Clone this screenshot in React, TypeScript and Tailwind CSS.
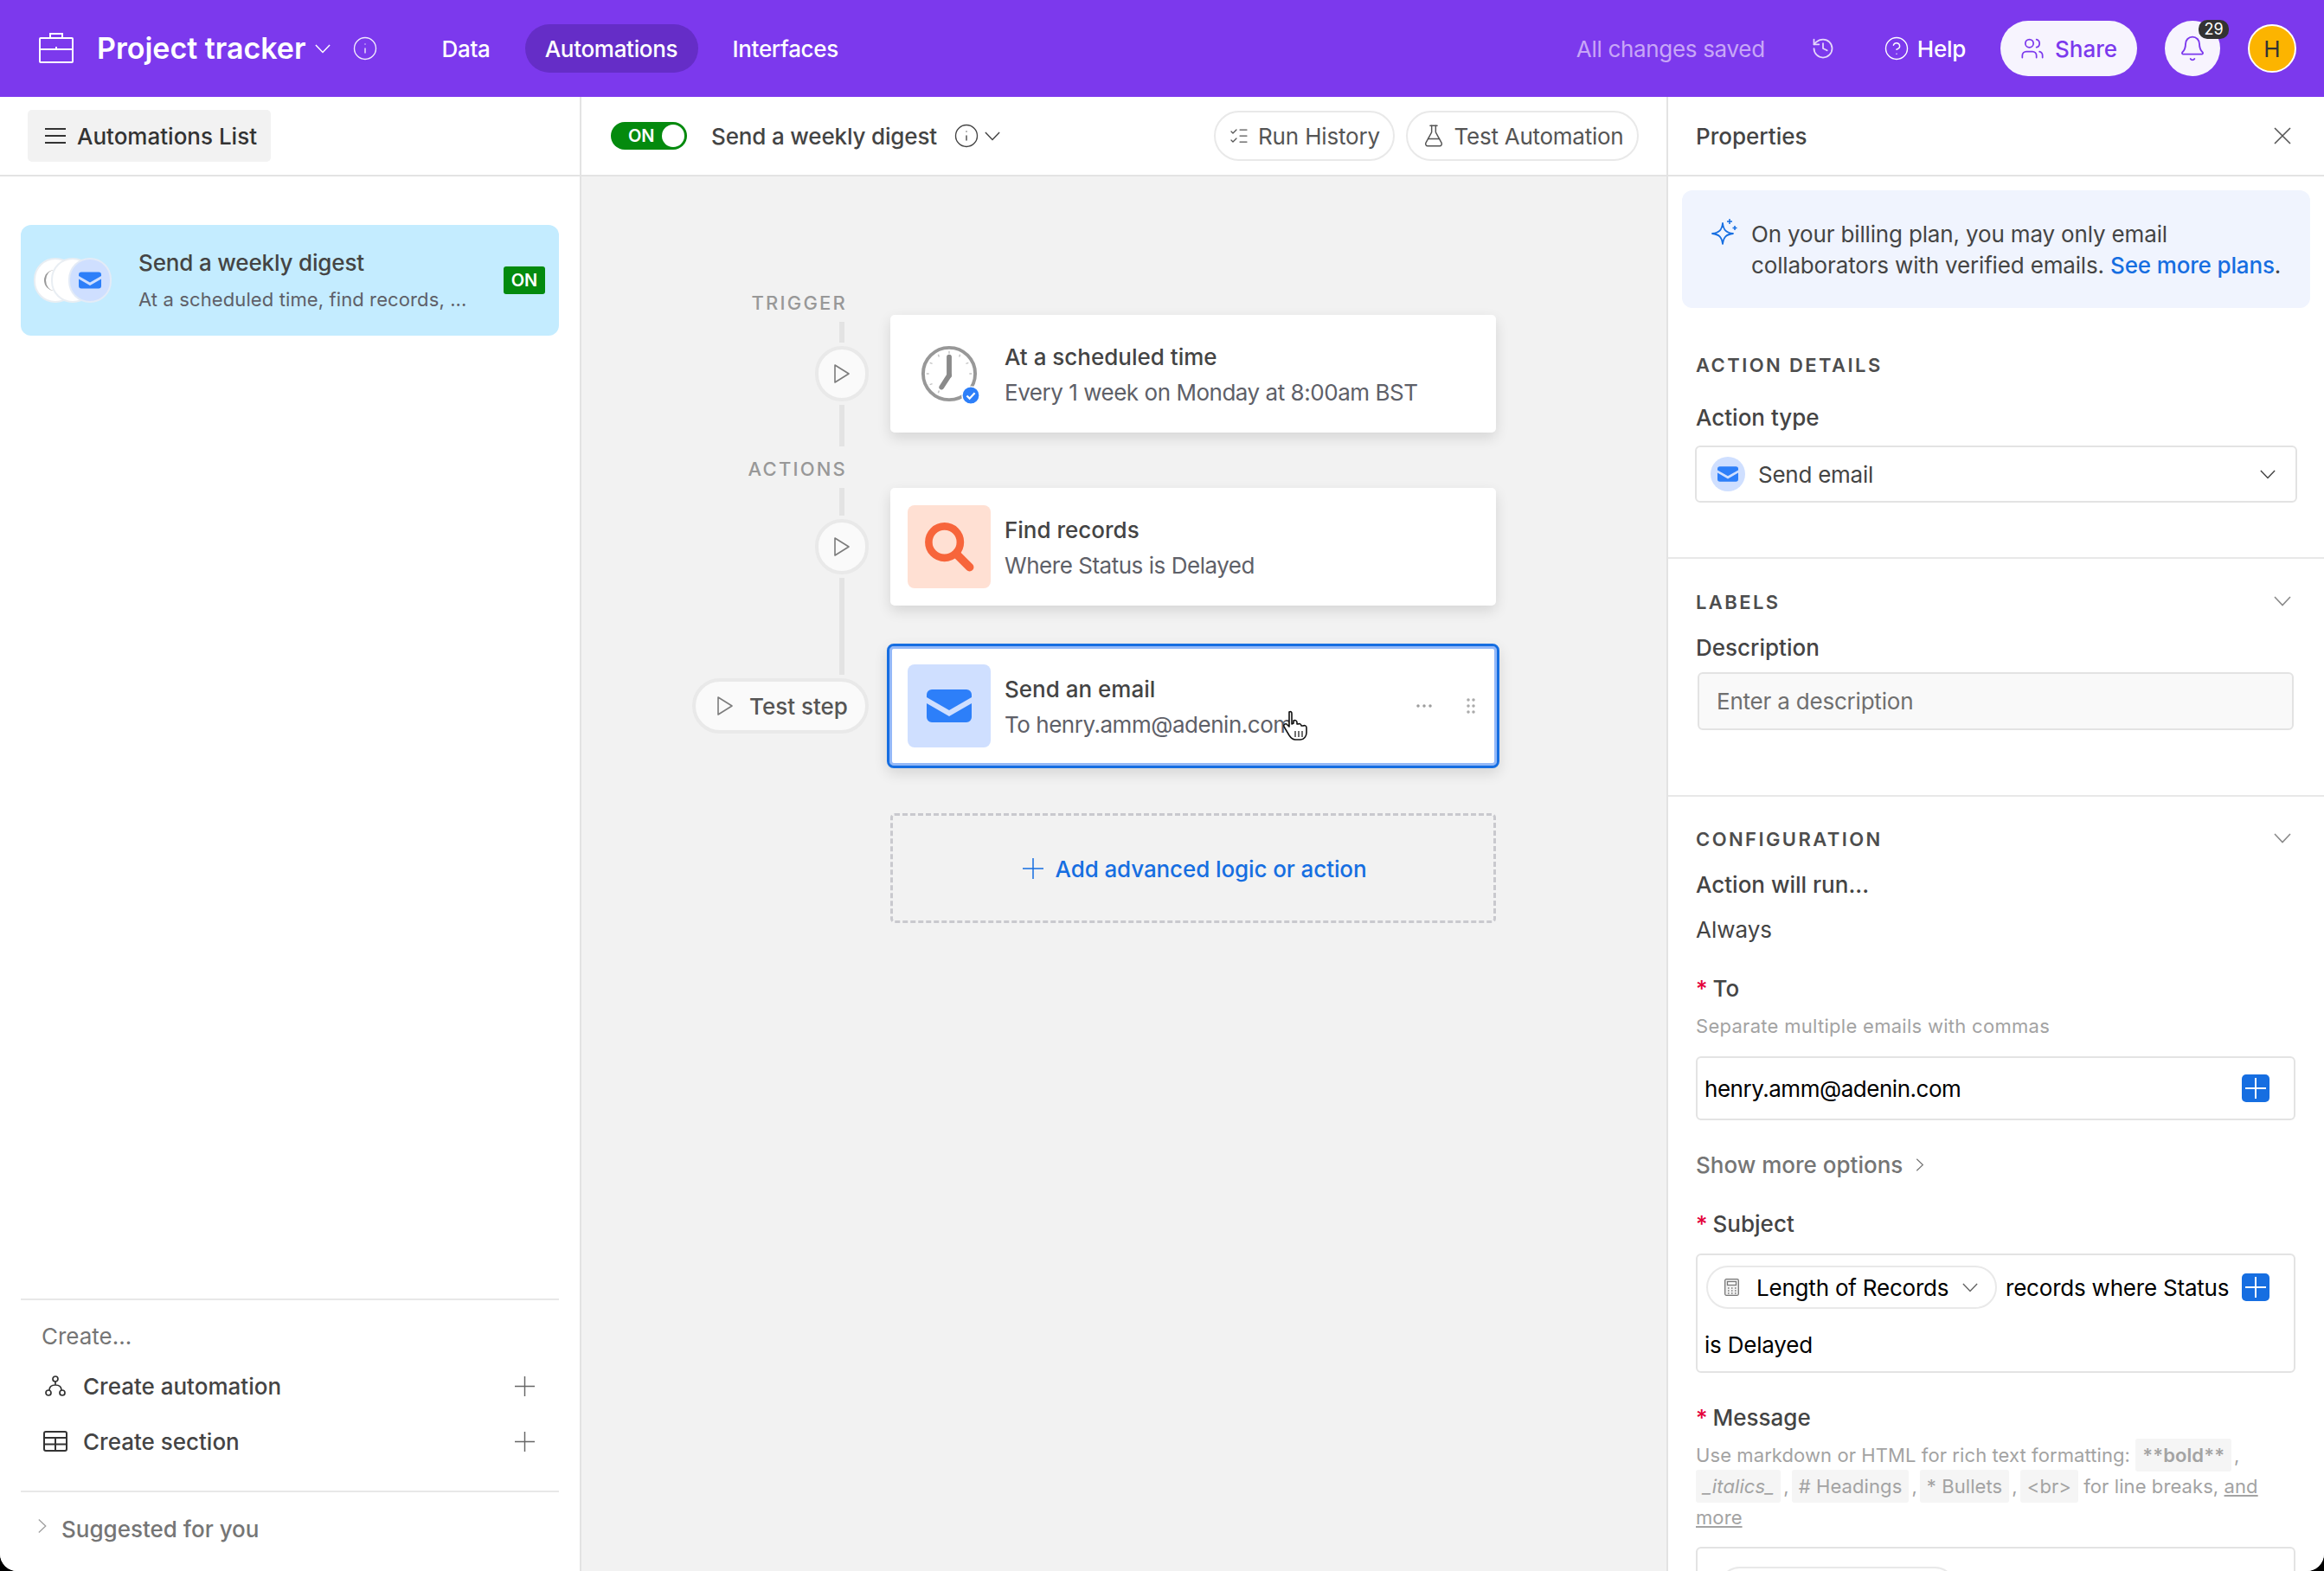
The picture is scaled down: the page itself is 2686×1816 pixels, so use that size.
import React from 'react';
import { Bell, CircleHelp, Ellipsis, FlaskConical, GripVertical, History, Info, ListChecks, Users } from 'lucide-react';

const MailGlyph: React.FC<{ className?: string }> = ({ className }) => (
  <svg viewBox="0 0 52 38" className={className}>
    <path d="M6 0h40a6 6 0 0 1 6 6v3L26 24 0 9V6a6 6 0 0 1 6-6z" fill="#2d7ff9" />
    <path d="M0 16l26 15 26-15v16a6 6 0 0 1-6 6H6a6 6 0 0 1-6-6z" fill="#2d7ff9" />
  </svg>
);

const PlayGlyph: React.FC = () => (
  <svg viewBox="0 0 20 24" className="w-[20px] h-[24px]" fill="none" stroke="#7c7c7c" strokeWidth="1.6" strokeLinejoin="round">
    <path d="M2 2l16 10L2 22z" />
  </svg>
);

// thin chevron that fills its box, the reference draws them wide and flat
const Chevron: React.FC<{ className?: string }> = ({ className }) => (
  <svg viewBox="0 0 20 12" className={className} fill="none" stroke="currentColor" strokeWidth="1.6">
    <path d="M1 1l9 9.5L19 1" />
  </svg>
);

const PlusGlyph: React.FC<{ className?: string; weight?: number }> = ({ className, weight = 1.5 }) => (
  <svg viewBox="0 0 24 24" className={className} fill="none" stroke="currentColor" strokeWidth={weight}>
    <path d="M12 0v24M0 12h24" />
  </svg>
);

const PlayDot: React.FC = () => (
  <div className="w-[62px] h-[64px] rounded-full bg-[#fafafa] border-4 border-[#e9e9e9] flex items-center justify-center">
    <PlayGlyph />
  </div>
);

const Line: React.FC<{ className: string }> = ({ className }) => (
  <div className={`w-[6px] mr-[28px] bg-[#e3e3e3] ${className}`} />
);

const RailLabel: React.FC<{ children: React.ReactNode }> = ({ children }) => (
  <div className="h-[30px] leading-[30px] mr-[25px] text-[22px] font-medium tracking-[0.1em] text-[#989898]">{children}</div>
);

const SectionTitle: React.FC<{ children: React.ReactNode; chevron?: boolean }> = ({ children, chevron }) => (
  <div className="h-[30px] flex items-center justify-between pr-[38px]">
    <span className="text-[22px] font-semibold tracking-[0.11em] text-[#4d4d4d]">{children}</span>
    {chevron && <Chevron className="w-[20px] h-[12px] mb-[2px] text-[#8a8a8a]" />}
  </div>
);

const FieldLabel: React.FC<{ children: React.ReactNode; required?: boolean; className?: string }> = ({ children, required, className }) => (
  <div className={`h-[32px] leading-[32px] text-[26px] font-medium text-[#444444] ${className ?? ''}`}>
    {required && <span className="text-[#e4003a] mr-[6px]">*</span>}
    {children}
  </div>
);

const AddToken: React.FC = () => (
  <div className="w-[32px] h-[32px] rounded-[5px] bg-[#166ee1] flex items-center justify-center shrink-0 text-white">
    <PlusGlyph className="w-[24px] h-[24px]" weight={2} />
  </div>
);

const Code: React.FC<{ children: React.ReactNode; className?: string }> = ({ children, className }) => (
  <span className={`bg-[#f5f5f5] px-[8px] py-[6px] rounded-[3px] ${className ?? ''}`}>{children}</span>
);

const Comma: React.FC = () => <span className="mx-[3px]">,</span>;

const TopBar: React.FC = () => (
  <header className="h-[112px] bg-[#7c39ed] flex items-center text-white shrink-0">
    <svg viewBox="0 0 40 36" className="w-[42px] h-[36px] ml-[44px] mb-[3px]" fill="none" stroke="white" strokeWidth="2">
      <path d="M13 7V2h14v5" />
      <rect x="1" y="7" width="38" height="28" rx="1" />
      <path d="M1 20h38" />
      <path d="M20 17v2" />
    </svg>
    <span className="ml-[26px] text-[34px] font-semibold leading-none">Project tracker</span>
    <Chevron className="ml-[11px] w-[18px] h-[11px]" />
    <Info className="ml-[25px] w-[30px] h-[30px] opacity-90" strokeWidth={1.1} />
    <nav className="ml-[73px] flex items-center text-[26px] font-medium tracking-[-0.012em]">
      <span>Data</span>
      <span className="ml-[40px] h-[56px] w-[200px] rounded-full bg-[#652dc7] flex items-center justify-center">Automations</span>
      <span className="ml-[40px]">Interfaces</span>
    </nav>
    <div className="ml-auto flex items-center">
      <span className="text-[26px] text-[#c8a6f7] tracking-[-0.012em]">All changes saved</span>
      <History className="ml-[53px] w-[28px] h-[28px] text-[#e6d8fb]" strokeWidth={1.5} />
      <CircleHelp className="ml-[56px] w-[30px] h-[30px]" strokeWidth={1.1} />
      <span className="ml-[9px] text-[26px] font-medium tracking-[-0.01em]">Help</span>
      <div className="ml-[40px] h-[64px] w-[158px] rounded-full bg-[#f7f4fe] text-[#7c39ed] flex items-center justify-center gap-[12px] text-[26px] font-medium">
        <Users className="w-[28px] h-[28px]" strokeWidth={1.5} />
        Share
      </div>
      <div className="relative ml-[32px] w-[64px] h-[64px] rounded-full bg-[#f7f4fe] flex items-center justify-center">
        <Bell className="w-[32px] h-[32px] text-[#7c39ed]" strokeWidth={1.4} />
        <span className="absolute -top-[1px] left-[39px] w-[35px] h-[22px] rounded-[10px] bg-[#333333] text-white text-[18px] leading-[22px] text-center">29</span>
      </div>
      <div className="ml-[32px] mr-[32px] w-[56px] h-[56px] rounded-full bg-[#fcb400] border-2 border-white text-[#333333] flex items-center justify-center text-[26px]">H</div>
    </div>
  </header>
);

const Sidebar: React.FC = () => (
  <aside className="w-[672px] shrink-0 flex flex-col bg-white border-r-2 border-[#e3e3e3]">
    <div className="h-[92px] border-b-2 border-[#e3e3e3] flex items-center pl-[32px] shrink-0">
      <div className="w-[281px] h-[60px] rounded-[5px] bg-[#f2f2f2] flex items-center pl-[20px] gap-[13px] text-[26px] font-medium text-[#333333]">
        <svg viewBox="0 0 24 18" className="w-[24px] h-[18px]" fill="none" stroke="currentColor" strokeWidth="2">
          <path d="M0 1h24M0 9h24M0 17h24" />
        </svg>
        Automations List
      </div>
    </div>
    <div className="flex-1 px-[24px] pt-[56px]">
      <div className="h-[128px] rounded-[12px] bg-[#c4ecff] flex items-center pl-[15px] pr-[16px]">
        <div className="flex w-[121px] shrink-0">
          <div className="w-[50px] h-[52px] rounded-full bg-white border-2 border-[#e9eef3] flex items-center pl-[10px]">
            <div className="w-[12px] h-[24px] rounded-l-full border-l-2 border-[#999999]" />
          </div>
          <div className="-ml-[30px] w-[50px] h-[52px] rounded-full bg-white border-2 border-[#e9eef3]" />
          <div className="-ml-[30px] w-[50px] h-[52px] rounded-full bg-[#cfdfff] border-2 border-[#e3ebf7] flex items-center justify-center">
            <MailGlyph className="w-[26px] h-[20px]" />
          </div>
        </div>
        <div className="flex-1 min-w-0">
          <div className="text-[26px] font-medium text-[#444444] leading-[32px] tracking-[-0.006em]">Send a weekly digest</div>
          <div className="mt-[11px] text-[22px] text-[#5e6068] leading-[30px] tracking-[0.005em]">At a scheduled time, find records, ...</div>
        </div>
        <span className="w-[48px] h-[32px] rounded-[3px] bg-[#048a0e] text-white text-[20px] font-semibold flex items-center justify-center">ON</span>
      </div>
    </div>
    <div className="mx-[24px] border-t-2 border-[#e8e8e8] pt-[26px] pb-[25px] px-[24px]">
      <div className="h-[32px] leading-[32px] text-[26px] text-[#757575]">Create...</div>
      <div className="mt-[9px] h-[64px] flex items-center text-[26px] font-medium text-[#444444]">
        <svg viewBox="0 0 24 24" className="ml-[4px] w-[24px] h-[24px] mr-[20px]" fill="none" stroke="#333333" strokeWidth="1.7">
          <circle cx="12" cy="4" r="3" />
          <circle cx="4" cy="20" r="3" />
          <circle cx="20" cy="20" r="3" />
          <path d="M12 7v4M5 17c0-4 3-6 7-6s7 2 7 6" />
        </svg>
        Create automation
        <PlusGlyph className="ml-auto mr-[4px] w-[23px] h-[23px] text-[#666666]" />
      </div>
      <div className="h-[64px] flex items-center text-[26px] font-medium text-[#444444]">
        <svg viewBox="0 0 28 24" className="ml-[2px] w-[28px] h-[24px] mr-[18px]" fill="none" stroke="#333333" strokeWidth="2">
          <rect x="1" y="1" width="26" height="22" rx="2" />
          <path d="M1 8h26M1 15.5h26M14 8v15" />
        </svg>
        Create section
        <PlusGlyph className="ml-auto mr-[4px] w-[23px] h-[23px] text-[#666666]" />
      </div>
    </div>
    <div className="mx-[24px] border-t-2 border-[#e8e8e8] h-[93px] flex items-start pt-[23px] pl-[20px] text-[26px] font-medium text-[#757575]">
      <Chevron className="w-[18px] h-[10px] mt-[11px] -ml-[4px] mr-[13px] -rotate-90 text-[#a0a0a0]" />
      Suggested for you
    </div>
  </aside>
);

const FlowCard: React.FC<{ icon: React.ReactNode; title: string; sub: string; className?: string }> = ({ icon, title, sub, className }) => (
  <div className={`w-[700px] bg-white rounded-[5px] shadow-[0_6px_16px_rgba(0,0,0,0.12)] flex items-center pl-[20px] ${className ?? ''}`}>
    <div className="w-[96px] h-[96px] flex items-center justify-center shrink-0">{icon}</div>
    <div className="ml-[16px] pt-[3px]">
      <div className="text-[26px] font-medium text-[#444444] leading-[32px]">{title}</div>
      <div className="mt-[9px] text-[26px] text-[#5e6068] leading-[32px] tracking-[-0.018em]">{sub}</div>
    </div>
  </div>
);

const ClockIcon: React.FC = () => (
  <div className="relative w-[66px] h-[66px]">
    <svg viewBox="0 0 68 68" className="w-[66px] h-[66px]" fill="none" stroke="#989898">
      <circle cx="34" cy="34" r="31" strokeWidth="4" />
      <path d="M34 14v22" strokeWidth="6" strokeLinecap="round" stroke="#8a8a8a" />
      <path d="M34 36l-9 14" strokeWidth="6" strokeLinecap="round" stroke="#8a8a8a" />
      <path d="M34 7v3M61 34h-3M10 34H7M47 11l-1 3M21 11l1 3M11 21l3 1M57 21l-3 1M11 47l3-1M21 57l1-3" strokeWidth="1.5" stroke="#c4c4c4" />
    </svg>
    <svg viewBox="0 0 24 24" className="absolute right-[-3px] bottom-[-3px] w-[22px] h-[22px]">
      <circle cx="12" cy="12" r="11" fill="#2d7ff9" stroke="white" strokeWidth="1.5" />
      <path d="M7 12.5l3.5 3.5L17 9" fill="none" stroke="white" strokeWidth="2.5" />
    </svg>
  </div>
);

const Canvas: React.FC = () => (
  <main className="flex-1 min-w-0 flex flex-col bg-[#f2f2f2]">
    <div className="h-[92px] bg-white border-b-2 border-[#e3e3e3] flex items-center pl-[34px] pr-[32px] shrink-0">
      <div className="w-[88px] h-[32px] rounded-full bg-[#048a0e] flex items-center justify-between pl-[20px] pr-[3px]">
        <span className="text-white text-[20px] font-semibold">ON</span>
        <span className="w-[26px] h-[26px] rounded-full bg-white" />
      </div>
      <span className="ml-[28px] text-[26px] font-medium text-[#444444] tracking-[-0.006em]">Send a weekly digest</span>
      <Info className="ml-[19px] w-[30px] h-[30px] text-[#444444]" strokeWidth={1.1} />
      <Chevron className="ml-[6px] w-[18px] h-[11px] text-[#444444]" />
      <div className="ml-auto h-[58px] w-[209px] rounded-full bg-white border-2 border-[#e9e9e9] flex items-center justify-center gap-[10px] text-[26px] text-[#555555] tracking-[-0.006em]">
        <ListChecks className="w-[24px] h-[24px]" strokeWidth={1.25} />
        Run History
      </div>
      <div className="ml-[13px] h-[58px] w-[269px] rounded-full bg-white border-2 border-[#e9e9e9] flex items-center justify-center gap-[10px] text-[26px] text-[#555555] tracking-[-0.01em]">
        <FlaskConical className="w-[28px] h-[28px]" strokeWidth={1.25} />
        Test Automation
      </div>
    </div>

    <div className="flex-1 flex pl-[128px]">
      <div className="w-[204px] flex flex-col items-end pt-[131px]">
        <RailLabel>TRIGGER</RailLabel>
        <Line className="mt-[7px] h-[24px]" />
        <div className="mt-[4px]"><PlayDot /></div>
        <Line className="mt-[4px] h-[48px]" />
        <div className="mt-[11px]"><RailLabel>ACTIONS</RailLabel></div>
        <Line className="mt-[7px] h-[32px]" />
        <div className="mt-[4px]"><PlayDot /></div>
        <Line className="mt-[4px] h-[112px]" />
        <div className="mt-[4px] w-[204px] h-[64px] rounded-full bg-[#fafafa] border-4 border-[#e9e9e9] flex items-center pl-[24px] gap-[18px] text-[26px] font-medium text-[#555555]">
          <PlayGlyph />
          Test step
        </div>
      </div>

      <div className="ml-[25px] pt-[160px] flex flex-col">
        <FlowCard className="h-[136px]" icon={<ClockIcon />} title="At a scheduled time" sub="Every 1 week on Monday at 8:00am BST" />
        <FlowCard
          className="h-[136px] mt-[64px]"
          icon={
            <div className="w-[96px] h-[96px] rounded-[8px] bg-[#ffe0d3] flex items-center justify-center">
              <svg viewBox="0 0 54 54" className="w-[58px] h-[58px]" fill="none" stroke="#f7653b">
                <circle cx="22" cy="22" r="17" strokeWidth="8" />
                <path d="M35 35l14 14" strokeWidth="9" strokeLinecap="round" />
              </svg>
            </div>
          }
          title="Find records"
          sub="Where Status is Delayed"
        />
        <div className="relative -mx-[4px] mt-[44px] h-[144px] w-[708px] rounded-[8px] border-[3px] border-[#166ee1] bg-white shadow-[inset_0_0_0_3px_#93b8f8,0_6px_16px_rgba(0,0,0,0.12)] flex items-center pl-[21px]">
          <div className="w-[96px] h-[96px] rounded-[8px] bg-[#cfdfff] flex items-center justify-center shrink-0">
            <MailGlyph className="w-[52px] h-[38px]" />
          </div>
          <div className="ml-[16px] pt-[3px]">
            <div className="text-[26px] font-medium text-[#444444] leading-[32px]">Send an email</div>
            <div className="mt-[9px] text-[26px] text-[#5e6068] leading-[32px] tracking-[-0.018em]">To henry.amm@adenin.com</div>
          </div>
          <Ellipsis className="ml-auto w-[24px] h-[24px] text-[#9a9a9a]" strokeWidth={1.5} />
          <GripVertical className="ml-[30px] mr-[18px] w-[24px] h-[24px] text-[#a8a8a8]" strokeWidth={1.5} />
          <svg viewBox="0 0 32 36" className="absolute left-[454px] top-[74px] w-[32px] h-[36px]" fill="white" stroke="#111111" strokeWidth="1.6" strokeLinejoin="round">
            <path d="M8 2c2-1 3 0 3 2v12l2-1v-3c2-1 4 0 4 2v2l1 0c2-1 4 0 4 2l2 0c2-1 4 0 4 2v6c0 4-3 8-7 8h-6c-3 0-5-2-7-5L2 19c-1-2 1-4 3-3l3 3z" />
            <path d="M15 24v7M19 24v7M23 24v7" strokeWidth="1.2" />
          </svg>
        </div>
        <div className="mt-[52px] w-[700px] h-[127px] rounded-[5px] border-[3px] border-dashed border-[#c9c9ce] flex items-center justify-center gap-[14px] pl-[3px] pt-[1px] text-[26px] font-medium text-[#166ee1] tracking-[-0.004em]">
          <PlusGlyph className="w-[24px] h-[24px]" />
          Add advanced logic or action
        </div>
      </div>
    </div>
  </main>
);

const Properties: React.FC = () => (
  <aside className="w-[760px] shrink-0 bg-white border-l-2 border-[#e3e3e3] overflow-hidden">
    <div className="h-[92px] border-b-2 border-[#e3e3e3] flex items-center justify-between pl-[32px] pr-[38px]">
      <span className="text-[26px] font-medium text-[#444444]">Properties</span>
      <svg viewBox="0 0 20 20" className="w-[20px] h-[20px] text-[#555555]" fill="none" stroke="currentColor" strokeWidth="1.6">
        <path d="M1 1l18 18M19 1L1 19" />
      </svg>
    </div>

    <div className="mt-[16px] mx-[16px] h-[136px] rounded-[12px] bg-[#f0f4fe] flex pl-[34px] pt-[33px]">
      <svg viewBox="0 0 30 30" className="w-[30px] h-[30px] shrink-0" fill="none" stroke="#166ee1" strokeWidth="1.8" strokeLinejoin="round">
        <path d="M13 5c1 8 4 11 12 12-8 1-11 4-12 12-1-8-4-11-12-12 8-1 11-4 12-12z" />
        <path d="M21 0v6M18 3h6M27 8v5M24.500 10.500h5" strokeWidth="1.5" />
      </svg>
      <p className="ml-[16px] text-[26px] leading-[36px] text-[#444444] tracking-[-0.006em]">
        On your billing plan, you may only email
        <br />
        collaborators with verified emails. <span className="text-[#166ee1] font-medium">See more plans</span>.
      </p>
    </div>

    <section className="pl-[32px] pt-[51px] pb-[63px] border-b-2 border-[#e8e8e8]">
      <SectionTitle>ACTION DETAILS</SectionTitle>
      <FieldLabel className="mt-[30px]">Action type</FieldLabel>
      <div className="mt-[16px] -ml-[1px] w-[696px] h-[66px] rounded-[6px] border-2 border-[#e3e3e3] flex items-center pl-[16px] pr-[23px] text-[26px] text-[#444444] tracking-[-0.01em]">
        <div className="w-[40px] h-[40px] rounded-full bg-[#cfdfff] flex items-center justify-center">
          <MailGlyph className="w-[24px] h-[18px]" />
        </div>
        <span className="ml-[15px]">Send email</span>
        <Chevron className="ml-auto w-[18px] h-[11px]" />
      </div>
    </section>

    <section className="pl-[32px] pt-[35px] pb-[75px] border-b-2 border-[#e8e8e8]">
      <SectionTitle chevron>LABELS</SectionTitle>
      <FieldLabel className="mt-[22px]">Description</FieldLabel>
      <div className="mt-[12px] ml-[2px] w-[689px] h-[67px] rounded-[6px] border-2 border-[#e3e3e3] bg-[#f9f9f9] flex items-center pl-[20px] text-[26px] text-[#6f6f6f] tracking-[-0.008em]">
        Enter a description
      </div>
    </section>

    <section className="pl-[32px] pt-[34px]">
      <SectionTitle chevron>CONFIGURATION</SectionTitle>
      <FieldLabel className="mt-[22px]">Action will run...</FieldLabel>
      <div className="mt-[20px] h-[32px] leading-[32px] text-[26px] text-[#444444]">Always</div>
      <FieldLabel required className="mt-[36px]">To</FieldLabel>
      <div className="mt-[12px] h-[30px] leading-[30px] text-[22px] text-[#a3a3a3] tracking-[0.013em]">Separate multiple emails with commas</div>
      <div className="mt-[20px] w-[693px] h-[74px] rounded-[6px] border-2 border-[#e3e3e3] flex items-center pl-[8px] pr-[28px] text-[26px] text-black tracking-[-0.018em]">
        henry.amm@adenin.com
        <div className="ml-auto"><AddToken /></div>
      </div>
      <div className="mt-[35px] h-[32px] flex items-center text-[26px] font-medium text-[#757575]">
        Show more options
        <Chevron className="ml-[12px] w-[16px] h-[9px] -rotate-90" />
      </div>
      <FieldLabel required className="mt-[37px]">Subject</FieldLabel>
      <div className="mt-[18px] w-[693px] h-[138px] rounded-[6px] border-2 border-[#e3e3e3] pl-[10px] pr-[28px] pt-[12px] text-[26px] text-black tracking-[-0.008em]">
        <div className="flex items-center">
          <div className="w-[336px] h-[50px] rounded-full border-2 border-[#e9e9e9] flex items-center pl-[19px] pr-[20px] shrink-0">
            <svg viewBox="0 0 17 20" className="w-[17px] h-[20px]" fill="none" stroke="#777777" strokeWidth="1.3">
              <rect x="0.700" y="0.700" width="15.600" height="18.600" rx="1.500" fill="#f2f2f2" />
              <rect x="3.500" y="3.500" width="10" height="4" fill="white" />
              <path d="M4 11h1.500M8 11h1.500M12 11h1.500M4 14h1.500M8 14h1.500M12 14h1.500M4 17h1.500M8 17h1.500M12 17h1.500" strokeWidth="1.500" />
            </svg>
            <span className="ml-[20px]">Length of Records</span>
            <Chevron className="ml-auto w-[18px] h-[11px] text-[#666666]" />
          </div>
          <span className="ml-[10px]">records where Status</span>
          <div className="ml-auto"><AddToken /></div>
        </div>
        <div className="mt-[26px] h-[32px] leading-[32px] -ml-[2px]">is Delayed</div>
      </div>
      <FieldLabel required className="mt-[36px]">Message</FieldLabel>
      <div className="mt-[9px] w-[680px] text-[22px] leading-[36px] text-[#a3a3a3] tracking-[0.004em]">
        Use markdown or HTML for rich text formatting: <Code className="font-semibold">**bold**</Code><Comma />
        <br />
        <Code className="italic">_italics_</Code><Comma /><Code># Headings</Code><Comma /><Code>* Bullets</Code><Comma /><Code>&lt;br&gt;</Code> for line breaks, <span className="underline">and</span>
        <br />
        <span className="underline">more</span>
      </div>
      <div className="mt-[16px] w-[693px] h-[90px] rounded-[6px] border-2 border-[#e3e3e3] pl-[24px] pt-[21px]">
        <div className="w-[275px] h-[50px] rounded-full border-2 border-[#e9e9e9]" />
      </div>
    </section>
  </aside>
);

const App: React.FC = () => (
  <div className="w-[2686px] h-[1816px] bg-black overflow-hidden [font-family:Inter,sans-serif]">
    <div className="h-full rounded-b-[20px] overflow-hidden flex flex-col bg-white">
      <TopBar />
      <div className="flex-1 min-h-0 flex">
        <Sidebar />
        <Canvas />
        <Properties />
      </div>
    </div>
  </div>
);

export default App;
